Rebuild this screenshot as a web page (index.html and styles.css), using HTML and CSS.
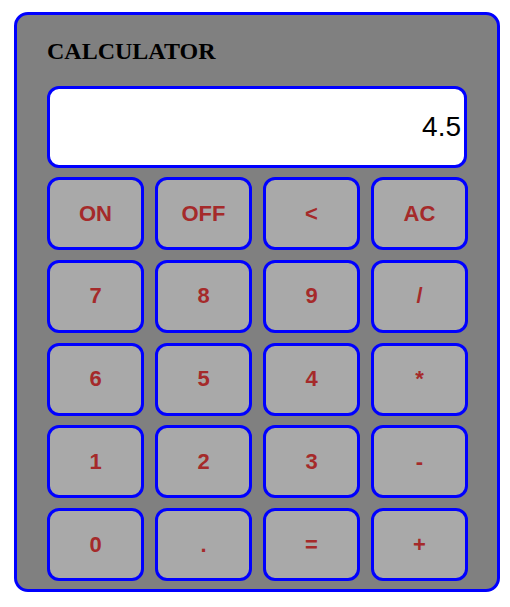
FILE: index.html
```html
<!DOCTYPE html>
<html>
<head>
<meta charset="utf-8">
<link rel="stylesheet" href="styles.css">
</head>
<body>
<div class="calc">
  <h2 class="title">CALCULATOR</h2>
  <div class="display">4.5</div>
  <div class="keys">
    <button class="key">ON</button>
    <button class="key">OFF</button>
    <button class="key">&lt;</button>
    <button class="key">AC</button>
    <button class="key">7</button>
    <button class="key">8</button>
    <button class="key">9</button>
    <button class="key">/</button>
    <button class="key">6</button>
    <button class="key">5</button>
    <button class="key">4</button>
    <button class="key">*</button>
    <button class="key">1</button>
    <button class="key">2</button>
    <button class="key">3</button>
    <button class="key">-</button>
    <button class="key">0</button>
    <button class="key">.</button>
    <button class="key">=</button>
    <button class="key">+</button>
  </div>
</div>
</body>
</html>
```

FILE: styles.css
```css
html, body {
  margin: 0;
  padding: 0;
  background: #ffffff;
}

.calc {
  box-sizing: border-box;
  width: 486px;
  height: 580px;
  margin: 12px 0 0 14px;
  border: 3px solid #0000ff;
  border-radius: 14px;
  background: #808080;
  padding: 22px 29px 0 30px;
}

.title {
  margin: 0;
  font-family: "Liberation Serif", serif;
  font-weight: bold;
  font-size: 24px;
  line-height: 28px;
  color: #000000;
}

.display {
  box-sizing: border-box;
  width: 420px;
  height: 82px;
  margin-top: 21px;
  border: 3px solid #0000ff;
  border-radius: 12px;
  background: #ffffff;
  display: flex;
  align-items: center;
  justify-content: flex-end;
  padding-right: 3px;
  font-family: "Liberation Sans", Arial, sans-serif;
  font-size: 28px;
  color: #000000;
}

.keys {
  margin-top: 9px;
  width: 421px;
  display: grid;
  grid-template-columns: repeat(4, 97px);
  grid-auto-rows: 73px;
  column-gap: 11px;
  row-gap: 9.75px;
}

.key {
  box-sizing: border-box;
  margin: 0;
  padding: 0;
  border: 3px solid #0000ff;
  border-radius: 12px;
  background: #a9a9a9;
  color: #a52a2a;
  font-family: "Liberation Sans", Arial, sans-serif;
  font-weight: bold;
  font-size: 22px;
}
```
